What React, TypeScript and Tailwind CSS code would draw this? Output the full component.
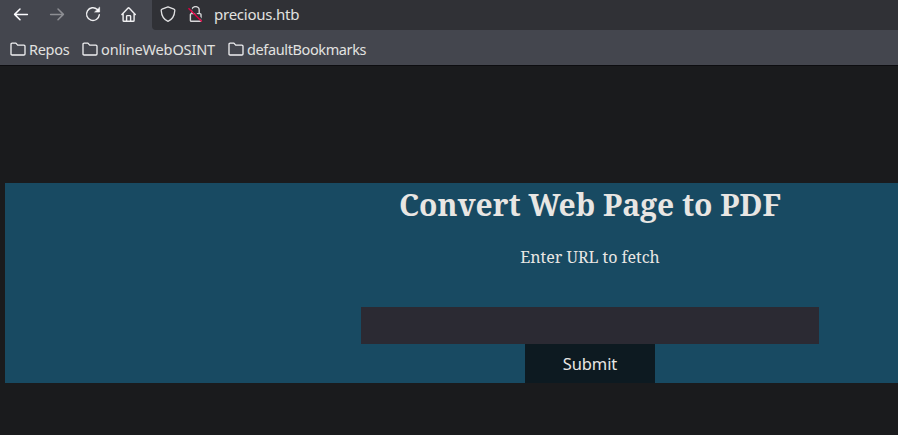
import React from "react";

const Folder = () => (
  <svg className="h-4 w-4 shrink-0" viewBox="0 0 16 16" fill="none" stroke="#f0f0f2" strokeWidth="1.3" strokeLinejoin="round">
    <path d="M2.1 2.1H5.9L7.7 4.1H13.9Q15 4.1 15 5.2V12.9Q15 14 13.9 14H2.1Q1 14 1 12.9V3.2Q1 2.1 2.1 2.1Z" />
  </svg>
);

const Bookmark = ({ label, className }: { label: string; className: string }) => (
  <div className={`flex shrink-0 items-center gap-[3px] ${className}`}>
    <Folder />
    <span className="whitespace-nowrap">{label}</span>
  </div>
);

export default function App() {
  return (
    <div className="flex h-[435px] w-[898px] flex-col overflow-hidden bg-[#1a1b1d] font-['Noto_Sans',sans-serif] text-[#e2e2e0]">
      <header className="flex h-[66px] shrink-0 flex-col border-b border-[#0d0d10] bg-[#44464e]">
        <nav className="flex h-[30px]">
          <div className="flex w-[152px] gap-5 pl-[13px] pt-[6px]">
            <svg className="h-4 w-4 shrink-0" viewBox="0 0 16 16" fill="none" stroke="#fbfbfe" strokeWidth="1.5" strokeLinecap="round" strokeLinejoin="round">
              <path d="M14.4 8.4H1.6M7 3L1.6 8.4L7 13.8" />
            </svg>
            <svg className="h-4 w-4 shrink-0" viewBox="0 0 16 16" fill="none" stroke="#8d8e93" strokeWidth="1.5" strokeLinecap="round" strokeLinejoin="round">
              <path d="M1.6 8.4H14.4M9 3L14.4 8.4L9 13.8" />
            </svg>
            <svg className="h-4 w-4 shrink-0" viewBox="0 0 16 16" fill="none" stroke="#f0f0f2" strokeWidth="1.4" strokeLinecap="round">
              <path d="M12.3 3.4A6.4 6.4 0 1 0 14.3 8.8" />
              <path d="M14.6 1.5V6H10Z" fill="#fbfbfe" strokeWidth=".7" strokeLinejoin="round" />
            </svg>
            <svg className="h-4 w-4 shrink-0" viewBox="0 0 16 16" fill="none" stroke="#f0f0f2" strokeWidth="1.4" strokeLinecap="round" strokeLinejoin="round">
              <path d="M.9 8.5L7.1 2Q7.6 1.5 8.1 2L14.3 8.5M2.1 7.6V14.4Q2.1 15.3 3 15.3H12.2Q13.1 15.3 13.1 14.4V7.6M5.6 15V10.3Q5.6 9.6 6.3 9.6H8.9Q9.6 9.6 9.6 10.3V15" />
            </svg>
          </div>
          <div className="flex flex-1 rounded-bl bg-[#303136] pl-2 pt-[6px]">
            <svg className="h-4 w-4 shrink-0" viewBox="0 0 16 16" fill="none" stroke="#e0e0e2" strokeWidth="1.3" strokeLinejoin="round">
              <path d="M8 .8L14 3.1Q14.9 3.4 14.8 4.4C14.5 9.2 12.2 13.6 8 15.3C3.8 13.6 1.5 9.2 1.2 4.4Q1.1 3.4 2 3.1Z" />
            </svg>
            <svg className="ml-3 h-4 w-4 shrink-0" viewBox="0 0 16 16" fill="none" stroke="#d8d8da" strokeWidth="1.4" strokeLinejoin="round">
              <path d="M4 7V4A3.6 3.4 0 0 1 11.2 4V7.6H12Q13 7.6 13 8.6V14.2Q13 15.3 12 15.3H3.4Q2.4 15.3 2.4 14.2V8.6Q2.4 7.6 3.4 7.6H11" />
              <path d="M1.7 1.3L14.8 14.3" stroke="#303136" strokeWidth="1.3" />
              <path d="M.5 2.3L13.8 15.5" stroke="#e20044" strokeWidth="1.4" />
            </svg>
            <span className="ml-[10px] -mt-[2px] text-[15px] leading-5 tracking-[-0.24px]">precious.htb</span>
          </div>
        </nav>
        <div className="flex h-[35px] items-center pl-[10px] pt-[3px] text-[14.5px] leading-5">
          <Bookmark label="Repos" className="w-[72px] tracking-[-0.3px]" />
          <Bookmark label="onlineWebOSINT" className="w-[146px] tracking-[-0.14px]" />
          <Bookmark label="defaultBookmarks" className="tracking-[-0.38px]" />
        </div>
      </header>
      <main className="ml-[5px] mt-[117px] flex h-[200px] w-[1170px] shrink-0 flex-col items-center bg-[#184a62] font-['Noto_Serif','DejaVu_Serif_Condensed','DejaVu_Serif',serif] text-[#e8e6e3]">
        <h1 className="text-[30px] font-bold leading-[43px] whitespace-nowrap">Convert Web Page to PDF</h1>
        <p className="mt-5 text-base leading-[22px] whitespace-nowrap">Enter URL to fetch</p>
        <input aria-label="URL" className="mt-[39px] h-[37px] w-[458px] shrink-0 bg-[#2b2a33] outline-none" />
        <button className="h-[39px] w-[130px] shrink-0 bg-[#0d1a21] pt-px font-['Noto_Sans',sans-serif] text-[16.5px] tracking-[-0.1px]">Submit</button>
      </main>
    </div>
  );
}
